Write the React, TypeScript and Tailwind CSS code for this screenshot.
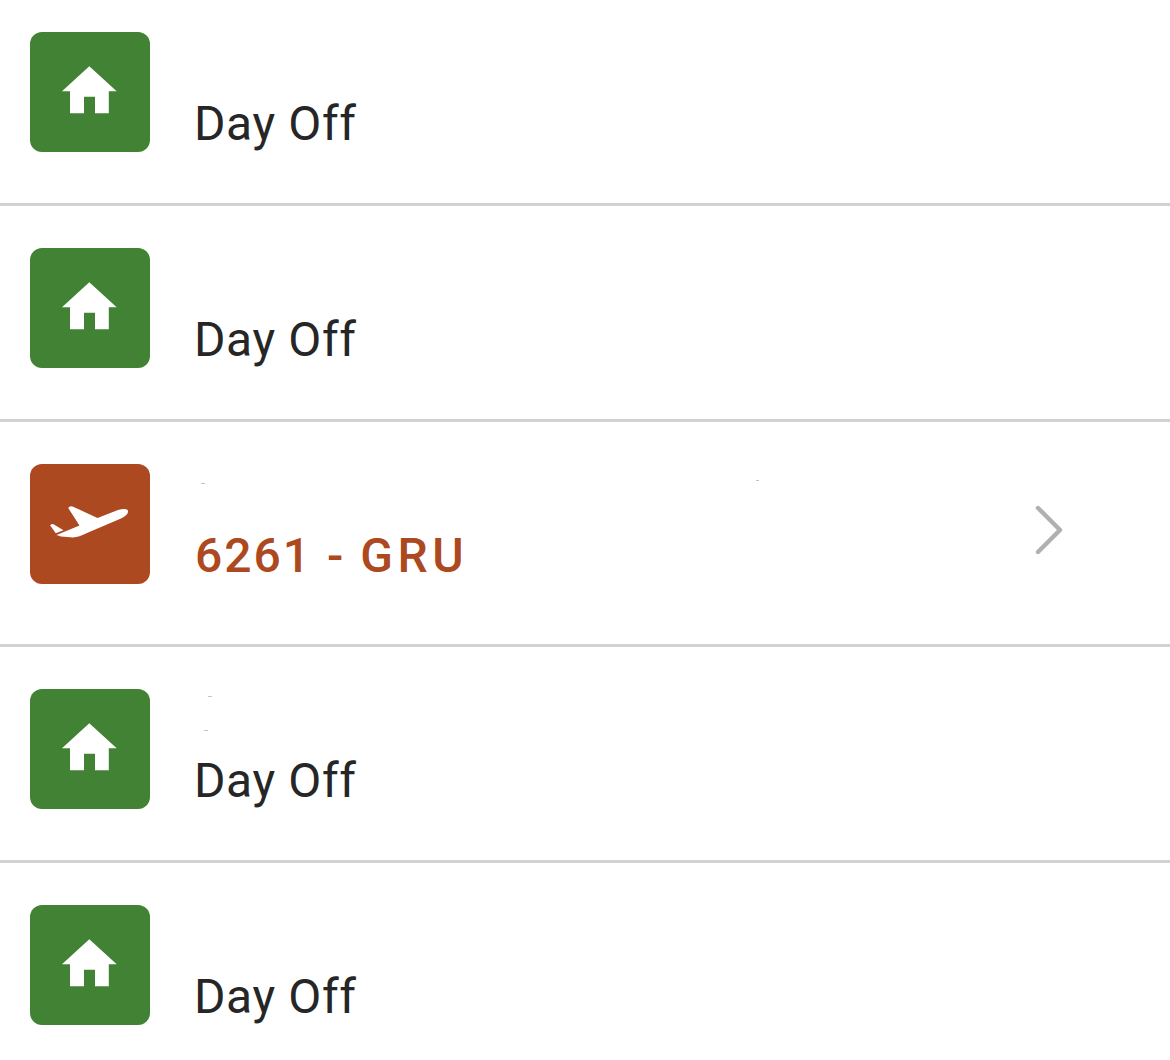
import React from "react";

interface RosterEntry {
  id: number;
  type: "off" | "flight";
  label: string;
  airport?: string;
  specks?: [number, number, number][];
}

const entries: RosterEntry[] = [
  { id: 1, type: "off", label: "Day Off" },
  { id: 2, type: "off", label: "Day Off" },
  {
    id: 3,
    type: "flight",
    label: "6261 - ",
    airport: "GRU",
    specks: [
      [6, 19, 4],
      [561, 16, 3],
    ],
  },
  {
    id: 4,
    type: "off",
    label: "Day Off",
    specks: [
      [13, 7, 4],
      [9, 41, 4],
    ],
  },
  { id: 5, type: "off", label: "Day Off" },
];

const HomeIcon = () => (
  <svg viewBox="0 0 120 120" className="h-full w-full fill-white">
    <path d="M59.3 34.2 L86.7 59.2 H78.8 V81.2 H65 V64.7 H54 V81.2 H40 V59.2 H32 Z" />
  </svg>
);

const PlaneIcon = () => (
  <svg viewBox="0 0 120 120" className="h-full w-full fill-white">
    <path d="M38.2 44 Q39.5 41.5 42.5 42.4 L67.5 54 L88 46 Q96 43.8 98 46.5 Q99 50.5 91 54.4 L57 69 Q49 73.2 43 73.4 L31 72.4 L26.5 71 L49.5 61.5 Z" />
    <path d="M20.2 61.5 Q21 59.3 23.5 60.2 L33.5 66.3 L25.8 69.2 Z" />
  </svg>
);

const RosterRow: React.FC<{ entry: RosterEntry }> = ({ entry }) => {
  const isFlight = entry.type === "flight";

  return (
    <li
      className={`flex shrink-0 border-b-3 border-[#d2d2d2] px-[30px] pt-[42px] first:h-[206px] first:pt-8 ${
        isFlight ? "h-[225px]" : "h-[216px]"
      }`}
    >
      <div
        className={`h-[120px] w-[120px] shrink-0 overflow-hidden rounded-[12px] ${
          isFlight ? "bg-[#ac4920]" : "bg-[#428234]"
        }`}
      >
        {isFlight ? <PlaneIcon /> : <HomeIcon />}
      </div>

      <div className="ml-[45px] flex-1">
        <svg className="block h-[68px] w-full fill-[#c4c4c4]">
          {entry.specks?.map(([x, y, w]) => (
            <rect key={`${x}-${y}`} x={x} y={y} width={w} height={1} />
          ))}
        </svg>
        <p
          className={`text-5xl leading-[48px] whitespace-pre ${
            isFlight
              ? "font-medium tracking-[2px] text-[#ac4920] [word-spacing:1px]"
              : "-ml-px tracking-[0.6px] text-[#262626]"
          }`}
        >
          {entry.label}
          {entry.airport && (
            <span className="tracking-[4.5px]">{entry.airport}</span>
          )}
        </p>
      </div>

      {isFlight && (
        <svg
          viewBox="0 0 32 56"
          className="mt-[38px] mr-[74px] h-14 w-8 shrink-0 fill-none stroke-[#b0b0b0]"
          strokeWidth={4.4}
          strokeLinecap="round"
          strokeLinejoin="round"
        >
          <path d="M4 6 L26 28 L4 50" />
        </svg>
      )}
    </li>
  );
};

const App: React.FC = () => {
  return (
    <ul className="flex h-[1060px] w-full flex-col overflow-hidden bg-white font-[Roboto,sans-serif]">
      {entries.map((entry) => (
        <RosterRow key={entry.id} entry={entry} />
      ))}
    </ul>
  );
};

export default App;
